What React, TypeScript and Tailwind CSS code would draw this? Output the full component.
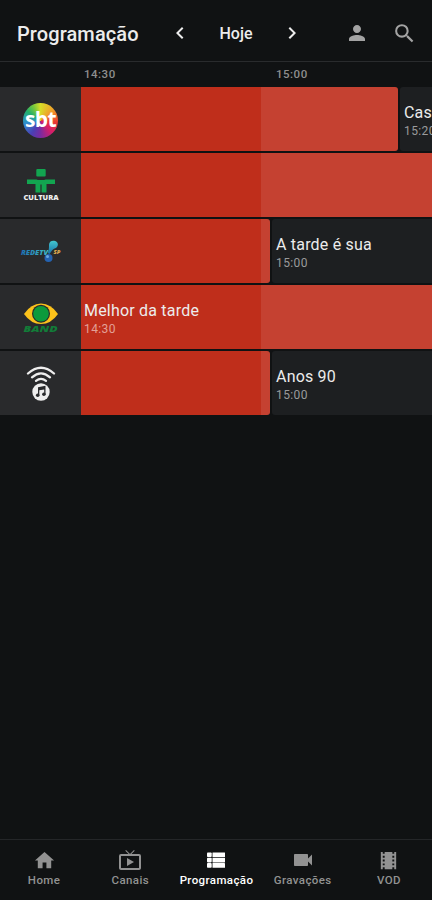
import React from "react";
import {
  MdChevronLeft,
  MdChevronRight,
  MdHome,
  MdLiveTv,
  MdPerson,
  MdSearch,
  MdTheaters,
  MdVideocam,
} from "react-icons/md";

function SbtLogo() {
  return (
    <div className="flex h-[35px] w-[35px] items-center justify-center rounded-full bg-[conic-gradient(#d8dc28,#f0a02a_50deg,#ea3a30_95deg,#d61e6a_135deg,#7a2aa0_180deg,#4a3fb4_215deg,#2f8fd0_260deg,#22b06a_305deg,#7cc83a_335deg,#d8dc28)]">
      <span className="-mt-px text-[21px] leading-none font-bold tracking-[-0.6px] text-white font-['Open_Sans',sans-serif]">
        sbt
      </span>
    </div>
  );
}

function CulturaLogo() {
  return (
    <svg width="40" height="36" viewBox="0 0 40 36">
      <g fill="#12a550">
        <rect x="15.300" y="1" width="9.400" height="7.500" rx="1" />
        <path d="M6 11.500h8.500c1.500 0 2 .5 3 .5h5c1 0 1.500-.5 3-.5H34v4.500h-8.500V24.500h-4.900V16.500h-1.200V24.500h-4.900v-8.500H6z" />
      </g>
      <text x="20" y="32" textAnchor="middle" textLength="35" lengthAdjust="spacingAndGlyphs" fontSize="7" fontWeight="800" fill="#eee" fontFamily="Open Sans, sans-serif">
        CULTURA
      </text>
    </svg>
  );
}

function RedeTvLogo() {
  return (
    <svg width="42" height="24" viewBox="0 0 42 24">
      <defs>
        <linearGradient id="redeText" x1="0" x2="1">
          <stop offset="0" stopColor="#1c6fb4" />
          <stop offset="1" stopColor="#3fc0c8" />
        </linearGradient>
        <linearGradient id="redeMark" x1="0" x2="0" y1="0" y2="1">
          <stop offset="0" stopColor="#43c7cf" />
          <stop offset="1" stopColor="#176fa8" />
        </linearGradient>
      </defs>
      <text x="1" y="15" textLength="27" lengthAdjust="spacingAndGlyphs" fontSize="7" fontStyle="italic" fontWeight="800" fill="url(#redeText)" fontFamily="Open Sans, sans-serif">
        REDETV
      </text>
      <path d="M29 5c0-3 2-4.500 5-4.300 3.500.3 5 3.500 3 6.300-1.200 1.600-3.500 1.500-5 3.500l-2.500 3.500-2-1C29 10.500 29 8 29 5z" fill="url(#redeMark)" />
      <circle cx="28.500" cy="18" r="4" fill="#2462b0" />
      <circle cx="27.500" cy="16.500" r="1.500" fill="#69a9df" />
      <text x="33.500" y="14" textLength="7" lengthAdjust="spacingAndGlyphs" fontSize="4.500" fontStyle="italic" fontWeight="800" fill="#dca94f" fontFamily="Open Sans, sans-serif">
        SP
      </text>
    </svg>
  );
}

function BandLogo() {
  return (
    <svg width="38" height="32" viewBox="0 0 38 32">
      <path d="M2 12Q9 1.500 19 1.500T36 12Q29 22 19 22T2 12z" fill="#fcc21b" />
      <circle cx="19" cy="11.700" r="9" fill="#292a2c" />
      <circle cx="19" cy="11.700" r="7.800" fill="#0c9a3c" />
      <text x="1.500" y="30" textLength="34" lengthAdjust="spacingAndGlyphs" fontSize="8.500" fontStyle="italic" fontWeight="800" fill="#127c38" fontFamily="Open Sans, sans-serif">
        BAND
      </text>
    </svg>
  );
}

function RadioLogo() {
  return (
    <svg width="32" height="38" viewBox="0 0 32 38">
      <g fill="none" stroke="#eee" strokeWidth="2.300" strokeLinecap="round">
        <path d="M3 8.500Q16-3 29 8.500" />
        <path d="M7 12.300Q16 4.500 25 12.300" />
        <path d="M11 15.800Q16 12 21 15.800" />
      </g>
      <circle cx="16" cy="27" r="8.700" fill="#eee" />
      <g fill="#292a2c">
        <path d="M13 22.200l7.500-1.400v8.600h-1.300v-5l-4.900.9v5.200H13z" />
        <circle cx="12.700" cy="30.300" r="1.800" />
        <circle cx="18.900" cy="29.300" r="1.800" />
      </g>
    </svg>
  );
}

function GridListIcon() {
  return (
    <svg width="20" height="16" viewBox="0 0 20 16" fill="#fff">
      {[0.5, 5.8, 11.1].map((y) => (
        <g key={y}>
          <rect x="1" y={y} width="4.700" height="4.600" rx="0.800" />
          <rect x="6.500" y={y} width="12.500" height="4.600" rx="0.300" />
        </g>
      ))}
    </svg>
  );
}

type Program = { title?: string; time?: string; width: string; elapsed?: boolean };

const live = "bg-[linear-gradient(90deg,#bf2e1b_180px,#c54131_180px)]";

const rows: { logo: React.ReactNode; programs: Program[] }[] = [
  { logo: <SbtLogo />, programs: [{ width: "w-[317px]", elapsed: true }, { title: "Casos de Família", time: "15:20", width: "w-[200px]" }] },
  { logo: <CulturaLogo />, programs: [{ width: "w-[400px]", elapsed: true }] },
  { logo: <RedeTvLogo />, programs: [{ width: "w-[189px]", elapsed: true }, { title: "A tarde é sua", time: "15:00", width: "w-[300px]" }] },
  { logo: <BandLogo />, programs: [{ title: "Melhor da tarde", time: "14:30", width: "w-[400px]", elapsed: true }] },
  { logo: <RadioLogo />, programs: [{ width: "w-[189px]", elapsed: true }, { title: "Anos 90", time: "15:00", width: "w-[300px]" }] },
];

const tabs = [
  { label: "Home", icon: <MdHome size={23} /> },
  { label: "Canais", icon: <MdLiveTv size={24} /> },
  { label: "Programação", icon: <GridListIcon />, active: true },
  { label: "Gravações", icon: <MdVideocam size={24} /> },
  { label: "VOD", icon: <MdTheaters size={23} /> },
];

export default function App() {
  return (
    <div className="flex h-[900px] w-[432px] flex-col overflow-hidden bg-[#101213] font-[Roboto,sans-serif] text-[#ececec]">
      <header className="flex h-[62px] shrink-0 items-center border-b border-[#292b2d] pt-[5px] pl-[17px]">
        <h1 className="w-[151px] pt-px text-[20px] font-medium tracking-[0.1px]">Programação</h1>
        <MdChevronLeft size={24} />
        <span className="w-[88px] pt-px text-center text-[16px] font-medium">Hoje</span>
        <MdChevronRight size={24} />
        <MdPerson size={24} className="ml-[41px] text-[#a3a3a3]" />
        <MdSearch size={25} className="ml-[23px] text-[#a3a3a3]" />
      </header>

      <div className="flex h-[25px] shrink-0 items-center pl-[84px] text-[11.5px] font-medium tracking-[0.5px] text-[#8e8e8e]">
        <span className="w-[192px]">14:30</span>
        <span>15:00</span>
      </div>

      <main className="flex flex-1 flex-col gap-[2px] overflow-hidden">
        {rows.map((row, i) => (
          <div key={i} className="flex h-16 shrink-0">
            <div className="flex w-[81px] shrink-0 items-center justify-center bg-[#292a2c] pt-[2px]">{row.logo}</div>
            <div className="flex min-w-0 flex-1 gap-[2px] overflow-hidden">
              {row.programs.map((p, j) => (
                <div
                  key={j}
                  className={`flex shrink-0 flex-col justify-center rounded-r-[3px] pt-[5px] ${p.width} ${p.elapsed ? live + " pl-[3px]" : "rounded-l-[3px] bg-[#1d1f21] pl-[4px]"}`}
                >
                  {p.title && (
                    <>
                      <div className="text-[16px] leading-[20px] whitespace-nowrap tracking-[0.2px]">{p.title}</div>
                      <div className={`text-[12px] leading-[17px] tracking-[0.4px] ${p.elapsed ? "text-[#e3a097]" : "text-[#9a9b9c]"}`}>
                        {p.time}
                      </div>
                    </>
                  )}
                </div>
              ))}
            </div>
          </div>
        ))}
      </main>

      <nav className="grid h-[61px] shrink-0 grid-cols-5 border-t border-[#242628] pt-[8px] pl-px">
        {tabs.map((t) => (
          <div key={t.label} className={`flex flex-col items-center ${t.active ? "text-white" : "text-[#929292]"}`}>
            <div className="flex h-6 items-center">{t.icon}</div>
            <span className="text-[11.5px] leading-[16px] font-medium tracking-[0.4px]">{t.label}</span>
          </div>
        ))}
      </nav>
    </div>
  );
}
